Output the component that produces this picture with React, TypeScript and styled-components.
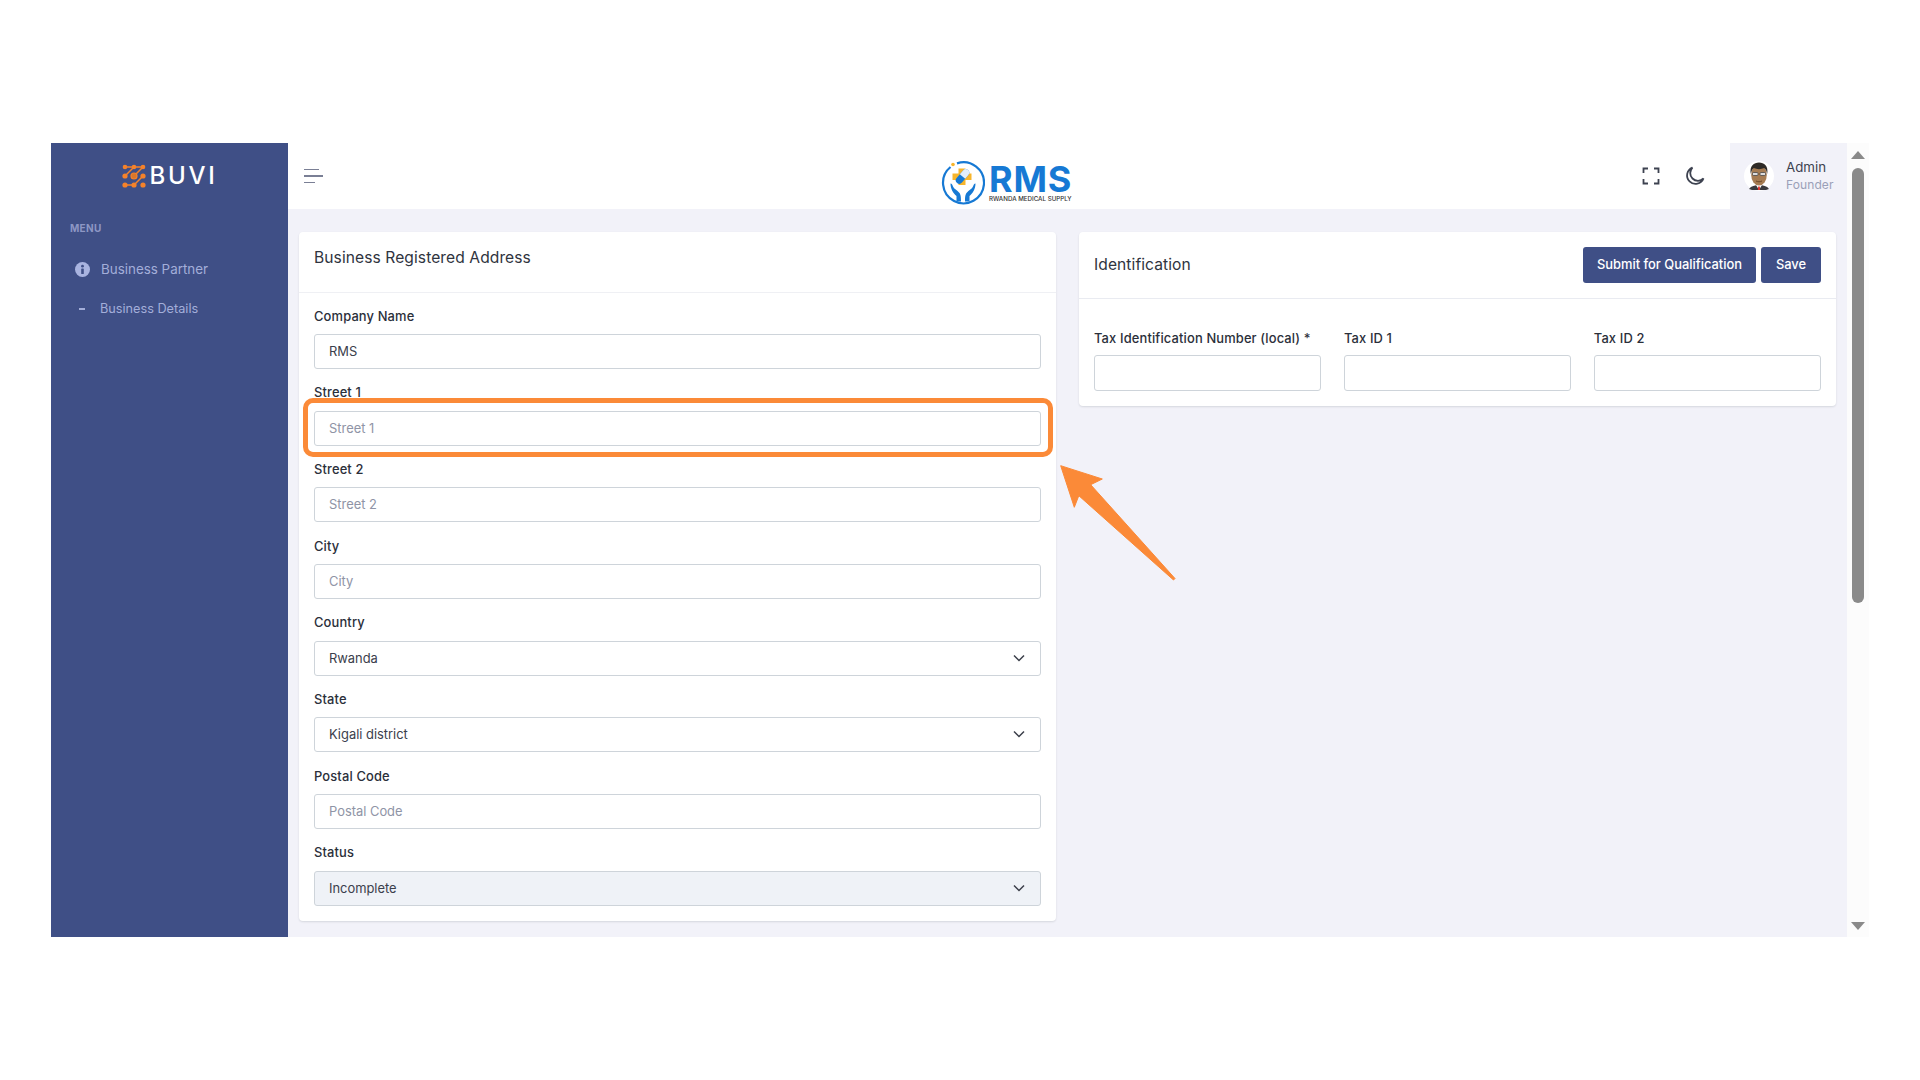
import styled, { createGlobalStyle } from 'styled-components';

const FONT = `Inter, "Open Sans", "Liberation Sans", sans-serif`;

const addressFields = [
  { label: 'Company Name', value: 'RMS' },
  { label: 'Street 1', placeholder: 'Street 1', highlighted: true },
  { label: 'Street 2', placeholder: 'Street 2' },
  { label: 'City', placeholder: 'City' },
  { label: 'Country', options: 'Rwanda' },
  { label: 'State', options: 'Kigali district' },
  { label: 'Postal Code', placeholder: 'Postal Code' },
  { label: 'Status', options: 'Incomplete', muted: true },
];

const taxFields = ['Tax Identification Number (local) *', 'Tax ID 1', 'Tax ID 2'];

const BuviMark = () => (
  <svg width="24" height="24" viewBox="0 0 24 24">
    <g stroke="#f5822a" strokeWidth="1.500" fill="none">
      <path d="M3 3h18M3 12L12 3M12 12l9-9M3 21h9l9-9" />
    </g>
    <g fill="#f5822a">
      <circle cx="3" cy="3" r="2.300" />
      <circle cx="12" cy="3" r="2.300" />
      <circle cx="21" cy="3" r="2.300" />
      <circle cx="3" cy="12" r="2.600" />
      <circle cx="21" cy="12" r="2.600" />
      <circle cx="3" cy="21" r="2.600" />
      <circle cx="12" cy="21" r="2.600" />
      <circle cx="21" cy="21" r="2.600" />
    </g>
    <circle cx="12" cy="12" r="3" fill="#d9772c" stroke="#f5822a" strokeWidth="1.200" />
  </svg>
);

const RmsMark = () => (
  <svg width="44" height="44" viewBox="0 0 44 44">
    <path d="M9.500 6A20.500 20.500 0 1 0 16 2.400" fill="none" stroke="#1679d4" strokeWidth="2.200" />
    <circle cx="12" cy="3.500" r="1.800" fill="#f7b52c" />
    <path d="M17.500 7.500h7v5h6v6.500h-6v5h-7v-5h-6v-6.500h6z" fill="#f7b52c" />
    <g transform="rotate(40 21.500 15.500)">
      <rect x="18" y="7" width="7" height="17" rx="3.500" fill="#1679d4" />
      <path d="M18 15.500v-5a3.500 3.500 0 0 1 7 0v5z" fill="#e3eefa" />
    </g>
    <path
      d="M9.500 22.500c1.500 0 2 1.500 2.500 3 1 2.500 4 3.500 6.500 6.500 1 1.500 1.500 3 1.500 8.500h-4.500v-5.500c-3-2.500-6-7-6-12.500z"
      fill="#1679d4"
    />
    <path
      d="M34.500 22.500c-1.500 0-2 1.500-2.500 3-1 2.500-4 3.500-6.500 6.500-1 1.500-1.500 3-1.500 8.500h4.500v-5.500c3-2.500 6-7 6-12.500z"
      fill="#1679d4"
    />
  </svg>
);

const Avatar = () => (
  <svg width="30" height="30" viewBox="0 0 30 30">
    <circle cx="15" cy="15" r="15" fill="#fff" />
    <path d="M5 28c2-3 6-4 10-4s8 1 10 4l-3 1H8z" fill="#3a3a3e" />
    <path d="M12 24h6l-3 5z" fill="#fff" />
    <path d="M14.200 25.500h1.600l.3 3.500h-2.200z" fill="#e0342e" />
    <ellipse cx="15" cy="14" rx="7.800" ry="10.500" fill="#a67c52" />
    <path d="M6.800 13C5.300 5 10 1.500 15 1.500S24.700 5 23.200 13c-.5-3-1.500-5-3-6-3 1.500-7.400 1.500-10.400 0-1.500 1-2.500 3-3 6z" fill="#2e2a26" />
    <rect x="8.500" y="11.500" width="5.500" height="3" rx="1" fill="#dcdcdc" stroke="#3a3a3a" strokeWidth=".7" />
    <rect x="16" y="11.500" width="5.500" height="3" rx="1" fill="#dcdcdc" stroke="#3a3a3a" strokeWidth=".7" />
    <path d="M12 20c2 1 4 1 6 0" stroke="#5c3a20" strokeWidth=".8" fill="none" />
  </svg>
);

const Chevron = () => (
  <svg width="12" height="8" viewBox="0 0 12 8">
    <path d="M1 1.500l5 5 5-5" fill="none" stroke="#3b3f4a" strokeWidth="1.500" />
  </svg>
);

const Field = ({ field }: { field: (typeof addressFields)[number] }) => (
  <FieldGroup>
    <FieldLabel>{field.label}</FieldLabel>
    <InputWrap>
      {field.options ? (
        <>
          <Select $muted={field.muted} defaultValue={field.options}>
            <option>{field.options}</option>
          </Select>
          <SelectIcon>
            <Chevron />
          </SelectIcon>
        </>
      ) : (
        <Input readOnly defaultValue={field.value} placeholder={field.placeholder} />
      )}
      {field.highlighted && <Highlight />}
    </InputWrap>
  </FieldGroup>
);

export default function App() {
  return (
    <Page>
      <GlobalStyle />
      <Frame>
        <Sidebar>
          <BrandRow>
            <BuviMark />
            <BrandName>BUVI</BrandName>
          </BrandRow>
          <MenuTitle>MENU</MenuTitle>
          <MenuItem>
            <svg width="15" height="15" viewBox="0 0 15 15">
              <circle cx="7.500" cy="7.500" r="7.500" fill="#a9b4e0" />
              <circle cx="7.500" cy="4.200" r="1.400" fill="#3f4f86" />
              <rect x="6.200" y="6.500" width="2.600" height="5.500" rx=".6" fill="#3f4f86" />
            </svg>
            Business Partner
          </MenuItem>
          <SubItem>
            <Dash />
            Business Details
          </SubItem>
        </Sidebar>

        <Main>
          <Header>
            <Burger aria-label="menu">
              <BurgerLine $width={15} />
              <BurgerLine $width={19} />
              <BurgerLine $width={11} />
            </Burger>
            <RmsLogo>
              <RmsMark />
              <RmsText>
                <RmsName>RMS</RmsName>
                <RmsTagline>RWANDA MEDICAL SUPPLY</RmsTagline>
              </RmsText>
            </RmsLogo>
            <HeaderTools>
              <ToolIcon>
                <svg width="18" height="18" viewBox="0 0 18 18" fill="none" stroke="#3d4250" strokeWidth="1.800">
                  <path d="M1.500 6V1.500H6M12 1.500h4.500V6M16.500 12v4.500H12M6 16.500H1.500V12" />
                </svg>
              </ToolIcon>
              <ToolIcon>
                <svg width="20" height="20" viewBox="0 0 20 20" fill="none" stroke="#3d4250" strokeWidth="1.800">
                  <path d="M7.500 1.500a8.500 8.500 0 1 0 11 11A7.500 7.500 0 0 1 7.500 1.500z" />
                </svg>
              </ToolIcon>
            </HeaderTools>
            <UserBlock>
              <Avatar />
              <UserText>
                <UserName>Admin</UserName>
                <UserRole>Founder</UserRole>
              </UserText>
            </UserBlock>
          </Header>

          <Content>
            <Card>
              <AddressHeader>
                <CardTitle>Business Registered Address</CardTitle>
              </AddressHeader>
              <AddressBody>
                {addressFields.map((field) => (
                  <Field key={field.label} field={field} />
                ))}
              </AddressBody>
            </Card>

            <Card>
              <IdentHeader>
                <CardTitle>Identification</CardTitle>
                <Actions>
                  <PrimaryButton type="button" $width={173}>
                    Submit for Qualification
                  </PrimaryButton>
                  <PrimaryButton type="button" $width={60}>
                    Save
                  </PrimaryButton>
                </Actions>
              </IdentHeader>
              <IdentBody>
                {taxFields.map((label) => (
                  <TaxGroup key={label}>
                    <FieldLabel>{label}</FieldLabel>
                    <TaxInput readOnly />
                  </TaxGroup>
                ))}
              </IdentBody>
            </Card>
          </Content>
        </Main>

        <ScrollTrack>
          <ArrowUp />
          <ScrollThumb />
          <ArrowDown />
        </ScrollTrack>
      </Frame>

      <Arrow width="118" height="118" viewBox="0 0 118 118">
        <path
          d="M0.700 0.700L42.300 14L30.700 19.700L115 113.500L113.500 115L18.800 30.700L14.300 42.300Z"
          fill="#fb8a38"
          stroke="#fb8a38"
          strokeLinejoin="round"
        />
      </Arrow>
    </Page>
  );
}

const GlobalStyle = createGlobalStyle`
  html, body {
    margin: 0;
    background: #fff;
  }
  * {
    box-sizing: border-box;
  }
  body {
    font-family: ${FONT};
  }
`;

const Page = styled.div`
  position: relative;
  height: 1080px;
  overflow: hidden;
  padding: 143px 0 0 51px;
`;

const Frame = styled.div`
  display: flex;
  width: 1818px;
  height: 794px;
`;

const Sidebar = styled.aside`
  width: 237px;
  flex: none;
  background: #3f4f86;
  padding-top: 21px;
`;

const BrandRow = styled.div`
  display: flex;
  align-items: center;
  justify-content: center;
  gap: 4px;
  height: 24px;
`;

const BrandName = styled.span`
  color: #fff;
  font-size: 24px;
  font-weight: 500;
  letter-spacing: 2.700px;
  line-height: 24px;
`;

const MenuTitle = styled.div`
  margin: 30px 0 0 19px;
  font-size: 10px;
  font-weight: 700;
  line-height: 20px;
  color: #8d97c4;
  letter-spacing: 0.3px;
`;

const MenuItem = styled.div`
  display: flex;
  align-items: center;
  gap: 11px;
  margin: 21px 0 0 24px;
  font-size: 13.400px;
  line-height: 20px;
  color: #a3aed9;
`;

const SubItem = styled.div`
  display: flex;
  align-items: center;
  gap: 15px;
  margin: 20px 0 0 28px;
  font-size: 12.700px;
  line-height: 20px;
  color: #a3aed9;
`;

const Dash = styled.span`
  width: 6px;
  height: 1.500px;
  background: #a3aed9;
`;

const Main = styled.div`
  flex: 1;
  min-width: 0;
  display: flex;
  flex-direction: column;
`;

const Header = styled.header`
  height: 66px;
  flex: none;
  display: flex;
  align-items: center;
  background: #fff;
  padding-left: 16px;
`;

const Burger = styled.div`
  display: flex;
  flex-direction: column;
  gap: 4.700px;
`;

const BurgerLine = styled.span<{ $width: number }>`
  display: block;
  width: ${(p) => p.$width}px;
  height: 1.800px;
  background: #7a7f95;
`;

const RmsLogo = styled.div`
  display: flex;
  align-items: center;
  gap: 4px;
  margin: 14px 0 0 618px;
  color: #1679d4;
`;

const RmsText = styled.div`
  display: flex;
  flex-direction: column;
  width: 84px;
`;

const RmsName = styled.span`
  font-size: 36px;
  font-weight: 700;
  line-height: 30px;
  letter-spacing: 0.800px;
`;

const RmsTagline = styled.span`
  font-size: 6.200px;
  font-weight: 500;
  line-height: 9px;
  white-space: nowrap;
  color: #333;
`;

const HeaderTools = styled.div`
  display: flex;
  align-items: center;
  gap: 25px;
  margin-left: auto;
  margin-right: 25px;
`;

const ToolIcon = styled.span`
  display: flex;
  color: #3d4250;
`;

const UserBlock = styled.div`
  width: 117px;
  height: 66px;
  display: flex;
  align-items: center;
  gap: 12px;
  padding-left: 14px;
  background: #f2f2f9;
`;

const UserText = styled.div`
  display: flex;
  flex-direction: column;
`;

const UserName = styled.span`
  font-size: 13.300px;
  line-height: 18px;
  color: #3d4250;
`;

const UserRole = styled.span`
  font-size: 12px;
  line-height: 18px;
  letter-spacing: 0.100px;
  color: #9aa0b8;
`;

const Content = styled.main`
  flex: 1;
  min-height: 0;
  display: grid;
  grid-template-columns: 757px 1fr;
  align-items: start;
  column-gap: 23px;
  padding: 23px 11px 0;
  background: #f2f2f9;
`;

const Card = styled.section`
  background: #fff;
  border-radius: 4px;
  box-shadow: 0 1px 2px rgba(56, 65, 74, 0.15);
`;

const AddressHeader = styled.div`
  height: 61px;
  padding: 14px 15px 0;
  border-bottom: 1px solid #eff0f4;
`;

const IdentHeader = styled.div`
  height: 67px;
  display: flex;
  align-items: center;
  justify-content: space-between;
  padding: 0 15px;
  border-bottom: 1px solid #e9ebf1;
`;

const CardTitle = styled.h2`
  margin: 0;
  font-size: 15.600px;
  font-weight: 400;
  letter-spacing: 0.080px;
  line-height: 24px;
  color: #2f3440;
`;

const AddressBody = styled.div`
  display: flex;
  flex-direction: column;
  gap: 14.200px;
  padding: 13.500px 15px 15px;
`;

const FieldGroup = styled.div`
  display: flex;
  flex-direction: column;
  gap: 7.500px;
`;

const FieldLabel = styled.label`
  font-size: 12.900px;
  font-weight: 500;
  letter-spacing: 0.150px;
  line-height: 20px;
  color: #2b2f3a;
`;

const InputWrap = styled.div`
  position: relative;
`;

const Input = styled.input`
  display: block;
  width: 100%;
  height: 35px;
  padding: 0 14px;
  border: 1px solid #ced4da;
  border-radius: 3px;
  background: #fff;
  font-family: ${FONT};
  font-size: 12.900px;
  color: #3b404c;
  outline: none;

  &::placeholder {
    color: #8f94a6;
  }
`;

const TaxInput = styled(Input)`
  height: 36px;
`;

const Select = styled.select<{ $muted?: boolean }>`
  display: block;
  width: 100%;
  height: 35px;
  padding: 0 14px;
  border: 1px solid #ced4da;
  border-radius: 3px;
  background: ${(p) => (p.$muted ? '#eff2f7' : '#fff')};
  font-family: ${FONT};
  font-size: 12.900px;
  color: #3b404c;
  appearance: none;
  outline: none;
`;

const SelectIcon = styled.span`
  position: absolute;
  top: 13px;
  right: 16px;
  display: flex;
  pointer-events: none;
`;

const Highlight = styled.div`
  position: absolute;
  top: -13px;
  bottom: -11.500px;
  left: -11.500px;
  right: -11.500px;
  border: 5px solid #fb8a38;
  border-radius: 10px;
  pointer-events: none;
`;

const Actions = styled.div`
  display: flex;
  gap: 5px;
`;

const PrimaryButton = styled.button<{ $width: number }>`
  width: ${(p) => p.$width}px;
  height: 36px;
  padding: 0 0 2px;
  border: none;
  border-radius: 3px;
  background: #3f4f86;
  color: #fff;
  font-family: ${FONT};
  font-size: 12.900px;
  font-weight: 500;
`;

const IdentBody = styled.div`
  display: grid;
  grid-template-columns: repeat(3, 1fr);
  gap: 22.700px;
  padding: 29.500px 15px 15px;
`;

const TaxGroup = styled.div`
  display: flex;
  flex-direction: column;
  gap: 6.500px;
  min-width: 0;
`;

const ScrollTrack = styled.div`
  width: 22px;
  flex: none;
  display: flex;
  flex-direction: column;
  align-items: center;
  padding: 8px 0 7px;
  background: #fcfcfc;
`;

const ArrowUp = styled.span`
  width: 0;
  height: 0;
  border-left: 7.500px solid transparent;
  border-right: 7.500px solid transparent;
  border-bottom: 8px solid #8a8a8a;
`;

const ScrollThumb = styled.span`
  width: 12px;
  height: 435px;
  margin-top: 9px;
  border-radius: 6px;
  background: #8a8a8a;
`;

const ArrowDown = styled.span`
  width: 0;
  height: 0;
  margin-top: auto;
  border-left: 7.500px solid transparent;
  border-right: 7.500px solid transparent;
  border-top: 8px solid #8a8a8a;
`;

const Arrow = styled.svg`
  position: absolute;
  left: 1060px;
  top: 465px;
`;
